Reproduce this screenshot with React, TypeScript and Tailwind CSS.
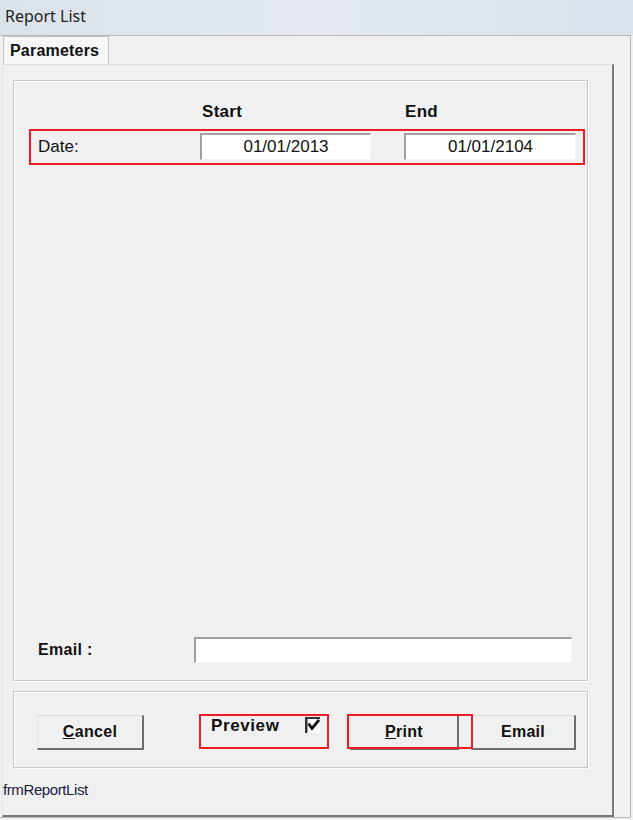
import React from 'react';

// 3D-looking sunken text field (classic Windows style)
function Field({ value, className }: { value?: string; className: string }) {
  return (
    <div
      className={`bg-white border-t-2 border-l-2 border-r border-b border-t-[#a0a0a0] border-l-[#a0a0a0] border-r-[#f4f4f4] border-b-[#f4f4f4] flex items-center justify-center text-[17px] text-[#111] ${className}`}
    >
      {value}
    </div>
  );
}

// raised push button
function Btn({ children, className }: { children: React.ReactNode; className: string }) {
  return (
    <div
      className={`h-[35px] bg-[#f0f0f0] border-t border-l border-r-2 border-b-2 border-t-[#dcdcdc] border-l-[#e6e6e6] border-r-[#6e6e6e] border-b-[#6e6e6e] flex items-center justify-center font-bold text-[16px] tracking-[0.3px] text-[#111] ${className}`}
    >
      {children}
    </div>
  );
}

export default function App() {
  return (
    <div className="w-[633px] h-[820px] bg-[#f0f0f0] overflow-hidden flex flex-col font-['Liberation_Sans',Arial,sans-serif] text-[#111]">
      {/* タイトルバー */}
      <div className="h-[35px] shrink-0 bg-gradient-to-r from-[#dbe2ea] via-[#e3e9ef] to-[#d9e1ea] flex items-center pl-[5px]">
        <span className="font-['Noto_Sans',sans-serif] text-[16px] text-[#222] leading-none -mt-[3px]">Report List</span>
      </div>

      {/* ウィンドウ本体 */}
      <div className="w-[631px] h-[783px] border-t border-r border-b border-[#b9b9b9] flex flex-col pl-[2px]">
        {/* タブ */}
        <div className="h-[28px] flex items-end shrink-0">
          <div className="ml-[1px] w-[106px] h-[28px] bg-[#f7f7f7] border-t border-l border-r border-[#c4c4c4] flex items-center pl-[6px] font-bold text-[16px] tracking-[0.2px]">
            Parameters
          </div>
        </div>

        {/* タブページ */}
        <div className="w-[612px] h-[753px] border-l border-l-[#e4e4e4] border-r-2 border-b-2 border-r-[#7a7a7a] border-b-[#7a7a7a] border-t border-t-[#dcdcdc] flex flex-col pl-[10px] pt-[15px]">
          {/* パラメータグループ */}
          <div className="w-[575px] h-[601px] border border-[#c6c6c6] shadow-[inset_1px_1px_0_#fff,1px_1px_0_#fff] flex flex-col">
            <div className="flex h-[41px] items-end font-bold text-[17px] leading-[20px]">
              <span className="ml-[188px] w-[203px] tracking-[0.3px]">Start</span>
              <span className="tracking-[0.3px]">End</span>
            </div>
            {/* 日付行 */}
            <div className="relative mt-[7px] ml-[15px] w-[556px] h-[36px] border-2 border-[#ec1c24] flex items-start pt-[2px]">
              <span className="pl-[7px] w-[169px] text-[17px] leading-[28px]">Date:</span>
              <Field value="01/01/2013" className="w-[171px] h-[27px]" />
              <Field value="01/01/2104" className="ml-[33px] w-[172px] h-[27px]" />
            </div>
            <div className="flex-1" />
            {/* メール行 */}
            <div className="flex items-center mb-[17px] h-[26px]">
              <span className="ml-[24px] w-[156px] font-bold text-[16px] tracking-[0.3px]">Email :</span>
              <Field className="w-[378px] h-[26px]" />
            </div>
          </div>

          {/* ボタングループ */}
          <div className="relative mt-[10px] w-[575px] h-[77px] border border-[#c6c6c6] shadow-[inset_1px_1px_0_#fff,1px_1px_0_#fff] flex items-start pt-[23px]">
            <Btn className="ml-[23px] w-[107px]">
              <span><u>C</u>ancel</span>
            </Btn>
            <div className="ml-[67px] flex items-start pt-[1px] h-[35px]">
              <span className="font-bold text-[17px] leading-[18px] mt-[1px] w-[68px] tracking-[0.6px]">Preview</span>
              <svg width="15" height="16" viewBox="0 0 15 16" className="ml-[26px] mt-[1px]">
                <rect x="0" y="0" width="15" height="16" fill="#fff" />
                <path d="M0 0H15V2H2.5V16H0Z" fill="#333" />
                <path d="M3.5 6.5 L7 11.5 L14 3" stroke="#111" strokeWidth="2.8" fill="none" />
              </svg>
            </div>
            <Btn className="ml-[30px] w-[109px]">
              <span><u>P</u>rint</span>
            </Btn>
            <Btn className="ml-[12px] w-[105px]">Email</Btn>

            {/* 注釈の赤枠 */}
            <div className="absolute left-[185px] top-[22px] w-[130px] h-[35px] border-2 border-[#ec1c24]" />
            <div className="absolute left-[333px] top-[22px] w-[126px] h-[35px] border-2 border-[#ec1c24]" />
          </div>

          <div className="mt-[11px] -ml-[10px] text-[15px] text-[#1c1c3c] tracking-[-0.4px]">frmReportList</div>
        </div>
      </div>
    </div>
  );
}
